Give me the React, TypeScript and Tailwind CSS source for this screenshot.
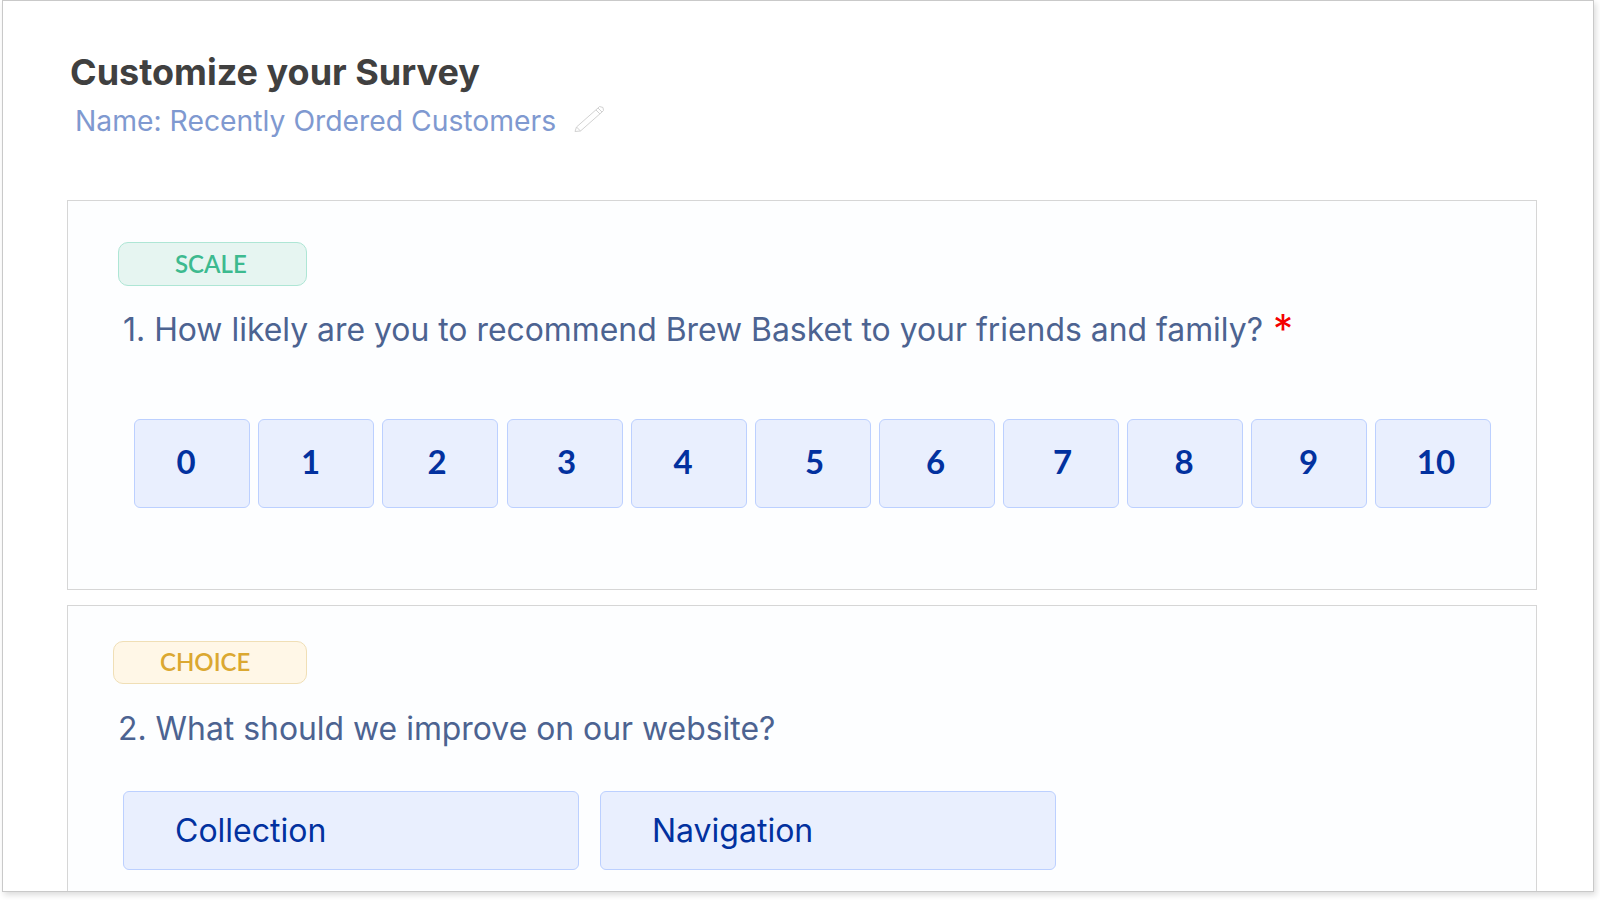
import React from 'react'

const scale = [
  { label: '0', nudge: 'pr-[12px]' },
  { label: '1', nudge: 'pr-[11px]' },
  { label: '2', nudge: 'pr-[6px]' },
  { label: '3', nudge: 'ml-[1px] pl-[3px]' },
  { label: '4', nudge: 'pr-[12px]' },
  { label: '5', nudge: 'pl-[3px]' },
  { label: '6', nudge: 'pr-[3px]' },
  { label: '7', nudge: 'pl-[3px]' },
  { label: '8', nudge: 'pr-[2px]' },
  { label: '9', nudge: 'pr-[1px]' },
  { label: '10', nudge: 'pl-[6px]' },
]

const PencilIcon = () => (
  <svg width="30" height="28" viewBox="0 0 30 28" fill="none" stroke="#d2d2d2" strokeWidth="1" className="ml-[18px] mt-[-5px]">
    <path d="M1 26.5 L2.5 22 L24 3 L28 7 L6.5 26 Z" />
    <path d="M2.5 22 L6.5 26 M22 5 L26 9 M24 3 L25.5 1.5 L29 2.5 L29.5 5.5 L28 7" />
  </svg>
)

const App = () => {
  return (
    <div className="h-[900px] w-[1600px] overflow-hidden bg-white font-['Inter',sans-serif]">
      <div className="ml-[2px] h-[892px] w-[1592px] overflow-hidden border border-[#c9c9c9] bg-white pl-[64px] pt-[49px] shadow-[2px_3px_6px_rgba(0,0,0,0.14)]">
        <h1 className="ml-[3px] text-[36px] leading-[44px] font-bold text-[#404040]">Customize your Survey</h1>
        <div className="ml-[8px] mt-[7px] flex items-center">
          <span className="text-[28.3px] leading-[40px] text-[#7f99d0]">Name: Recently Ordered Customers</span>
          <PencilIcon />
        </div>

        <section className="mt-[59px] h-[390px] w-[1470px] border border-[#d6d6d6] bg-[#fdfeff] pl-[50px] pt-[41px]">
          <div className="flex h-[44px] w-[189px] items-center rounded-[10px] border border-[#aee6d5] bg-[#e6f5f1] pb-[1px] pl-[56px] font-['Lato',sans-serif] text-[24px] font-semibold text-[#3dba8f]">SCALE</div>
          <p className="ml-[5px] mt-[22px] flex h-[44px] items-start text-[31.9px] leading-[44px] text-[#4c6391]">
            <span>1. How likely are you to recommend Brew Basket to your friends and family?</span>
            <span className="ml-[10px] mt-[-1px] text-[40px] leading-[44px] text-[#f40000]">*</span>
          </p>
          <div className="ml-[16px] mt-[67px] flex gap-[8px]">
            {scale.map((item) => (
              <div key={item.label} className={`flex h-[89px] w-[116px] items-center justify-center rounded-[6px] border border-[#bcd0ff] bg-[#e9effe] pb-[4px] font-['Lato',sans-serif] text-[33px] font-bold text-[#02319f] ${item.nudge}`}>
                {item.label}
              </div>
            ))}
          </div>
        </section>

        <section className="mt-[15px] h-[300px] w-[1470px] border border-[#d6d6d6] bg-[#fdfeff] pl-[45px] pt-[35px]">
          <div className="flex h-[43px] w-[194px] items-center rounded-[10px] border border-[#f0dfb6] bg-[#fff7e7] pb-[2px] pl-[46px] font-['Lato',sans-serif] text-[24px] font-semibold text-[#dba831]">CHOICE</div>
          <p className="ml-[5px] mt-[23px] text-[31.9px] leading-[44px] text-[#4c6391]">2. What should we improve on our website?</p>
          <div className="ml-[10px] mt-[40px] flex gap-[21px]">
            {['Collection', 'Navigation'].map((label) => (
              <div key={label} className="flex h-[79px] w-[456px] items-center rounded-[6px] border border-[#bcd0ff] bg-[#e9effe] pl-[51px] text-[32px] text-[#02319f]">
                {label}
              </div>
            ))}
          </div>
        </section>
      </div>
    </div>
  )
}

export default App
